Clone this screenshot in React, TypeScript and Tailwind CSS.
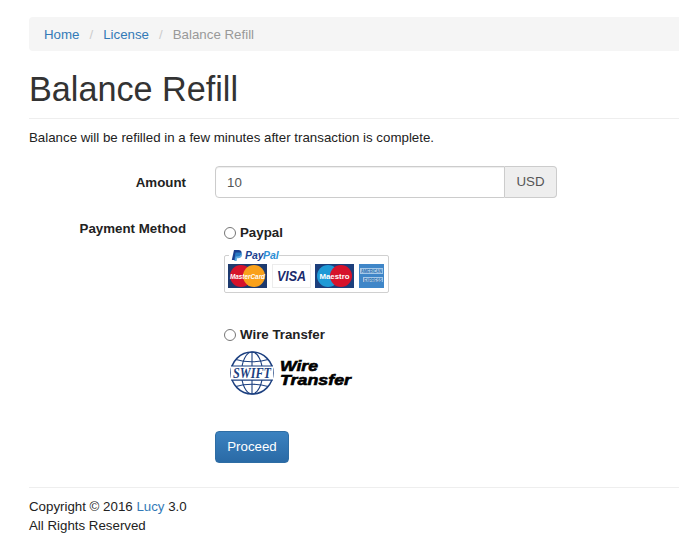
const FONT = "font-['Liberation_Sans',Arial,sans-serif]";

function PaypalBadge() {
  return (
    <svg width="166" height="46" viewBox="0 0 166 46" className="block">
      <rect x="0.5" y="6.5" width="164" height="37" rx="1.5" fill="#fff" stroke="#d0d0d0" />
      <rect x="5" y="0" width="50" height="14" fill="#fff" />
      <path d="M10 1h4.500c2.400 0 3.400 1.400 3 3.200-.5 2.300-2.200 3.300-4.400 3.300h-1.400l-.7 3.500H7.800z" fill="#1a3f8f" />
      <path d="M11.500 3.500h4.500c1.500 0 2.400 1 2 2.800-.5 2.200-2 3-3.700 3h-1.200l-.5 2.800H10.200z" fill="#2d8fd5" opacity="0.75" />
      <text x="21" y="10" fontFamily="'Liberation Sans',Arial,sans-serif" fontSize="10.500" fontWeight="700" fontStyle="italic" fill="#1a3f8f">Pay</text>
      <text x="39" y="10" fontFamily="'Liberation Sans',Arial,sans-serif" fontSize="10.500" fontWeight="700" fontStyle="italic" fill="#2d8fd5">Pal</text>

      <rect x="4" y="15" width="39" height="24" fill="#1d3a6e" />
      <circle cx="17" cy="27" r="11" fill="#d6122b" />
      <circle cx="30" cy="27" r="11" fill="#f9a11b" />
      <text x="23.500" y="30" textAnchor="middle" fontFamily="'Liberation Sans',Arial,sans-serif" fontSize="8" fontWeight="700" fontStyle="italic" fill="#fff" textLength="35" lengthAdjust="spacingAndGlyphs">MasterCard</text>

      <rect x="48.500" y="15.500" width="38" height="23" fill="#fff" stroke="#ececec" />
      <text x="67.500" y="32" textAnchor="middle" fontFamily="'Liberation Sans',Arial,sans-serif" fontSize="15" fontWeight="700" fontStyle="italic" fill="#1a2a6c" textLength="29" lengthAdjust="spacingAndGlyphs">VISA</text>

      <rect x="91" y="15" width="39" height="24" fill="#1c3f7c" />
      <circle cx="104" cy="27" r="11" fill="#1f9ad6" />
      <circle cx="117" cy="27" r="11" fill="#d6122b" />
      <text x="110.500" y="30" textAnchor="middle" fontFamily="'Liberation Sans',Arial,sans-serif" fontSize="8" fontWeight="700" fill="#fff" textLength="30" lengthAdjust="spacingAndGlyphs">Maestro</text>

      <rect x="135" y="15" width="25" height="24" fill="#3f86c8" />
      <rect x="136" y="19" width="23" height="6" fill="#a5c8e8" />
      <rect x="139" y="28" width="20" height="5" fill="#a5c8e8" />
      <text x="147.500" y="24" textAnchor="middle" fontFamily="'Liberation Sans',Arial,sans-serif" fontSize="5" fontWeight="700" fill="#2d6fae" textLength="21" lengthAdjust="spacingAndGlyphs">AMERICAN</text>
      <text x="149" y="32.500" textAnchor="middle" fontFamily="'Liberation Sans',Arial,sans-serif" fontSize="5" fontWeight="700" fill="#2d6fae" textLength="18" lengthAdjust="spacingAndGlyphs">EXPRESS</text>
    </svg>
  );
}

function SwiftBadge() {
  return (
    <svg width="130" height="48" viewBox="0 0 130 48" className="block">
      <g fill="none" stroke="#1d4080" strokeWidth="1.100">
        <circle cx="28" cy="23" r="21" strokeWidth="1.500" />
        <ellipse cx="28" cy="23" rx="10.500" ry="21" />
        <path d="M28 2v42" />
        <path d="M12 9.500c9 3 23 3 32 0M12 36.500c9-3 23-3 32 0M8 16.500h40M8 30h40" />
      </g>
      <rect x="7" y="16" width="42" height="14" fill="#fff" />
      <path d="M7 16h42M7 30h42" stroke="#1d4080" strokeWidth="1" />
      <text x="28" y="28" textAnchor="middle" fontFamily="'Liberation Serif','Times New Roman',serif" fontSize="15" fontWeight="700" fontStyle="italic" fill="#1d4080" textLength="38" lengthAdjust="spacingAndGlyphs">SWIFT</text>
      <text x="56" y="21" fontFamily="'Liberation Sans',Arial,sans-serif" fontSize="15" fontWeight="700" fontStyle="italic" fill="#000" stroke="#000" strokeWidth="0.6" textLength="38" lengthAdjust="spacingAndGlyphs">Wire</text>
      <text x="56" y="35" fontFamily="'Liberation Sans',Arial,sans-serif" fontSize="15" fontWeight="700" fontStyle="italic" fill="#000" stroke="#000" strokeWidth="0.6" textLength="71" lengthAdjust="spacingAndGlyphs">Transfer</text>
    </svg>
  );
}

function PaymentOption({ label, children }: { label: string; children: React.ReactNode }) {
  return (
    <div>
      <label className="flex h-5 items-center font-bold">
        <input type="radio" name="method" className="m-0 mr-[4px] h-[12px] w-[12px]" />
        {label}
      </label>
      {children}
    </div>
  );
}

export default function App() {
  return (
    <div className={`${FONT} h-[545px] w-[679px] overflow-hidden bg-white pl-[29px] pt-[17px] text-[13.3px] leading-5 text-[#222]`}>
      <ol className="flex h-[34px] items-center rounded-l-[4px] bg-[#f5f5f5] px-[15px] pt-[1px]">
        <li><a className="text-[#337ab7]">Home</a></li>
        <li className="px-[10px] text-[#ccc]">/</li>
        <li><a className="text-[#337ab7]">License</a></li>
        <li className="px-[10px] text-[#ccc]">/</li>
        <li className="text-[#999]">Balance Refill</li>
      </ol>

      <div className="mt-[17px] border-b border-[#eee] pb-[8px]">
        <h1 className="text-[34.2px] font-normal leading-[42px] text-[#333]">Balance Refill</h1>
      </div>

      <p className="mt-[9px] h-5">Balance will be refilled in a few minutes after transaction is complete.</p>

      <div className="mt-[18px] flex items-center">
        <label className="w-[157px] pt-[1px] text-right font-bold">Amount</label>
        <div className="ml-[29px] flex h-[32px] w-[342px]">
          <input
            readOnly
            value="10"
            className="h-full w-[290px] rounded-l-[4px] border border-[#ccc] px-[11px] text-[13.3px] text-[#555] shadow-[inset_0_1px_1px_rgba(0,0,0,0.075)] outline-none"
          />
          <span className="flex w-[52px] items-center justify-center rounded-r-[4px] border border-l-0 border-[#ccc] bg-[#eee] text-[#555]">USD</span>
        </div>
      </div>

      <div className="mt-[20px] flex">
        <label className="w-[157px] pt-[1px] text-right font-bold">Payment Method</label>
        <div className="ml-[38px] pt-[5px]">
          <PaymentOption label="Paypal">
            <div className="mt-[6px]"><PaypalBadge /></div>
          </PaymentOption>
          <div className="mt-[30px]">
            <PaymentOption label="Wire Transfer">
              <div className="mt-[5px]"><SwiftBadge /></div>
            </PaymentOption>
          </div>
        </div>
      </div>

      <button className="ml-[186px] mt-[33px] block h-[32px] w-[74px] rounded-[4px] border border-[#2e6da4] bg-gradient-to-b from-[#3b82c0] to-[#2a6aa6] text-[13.3px] text-white">
        Proceed
      </button>

      <div className="mt-[24px] border-t border-[#eee] pt-[9px] leading-[19px]">
        <p>Copyright © 2016 <a className="text-[#337ab7]">Lucy</a> 3.0</p>
        <p>All Rights Reserved</p>
      </div>
    </div>
  );
}
